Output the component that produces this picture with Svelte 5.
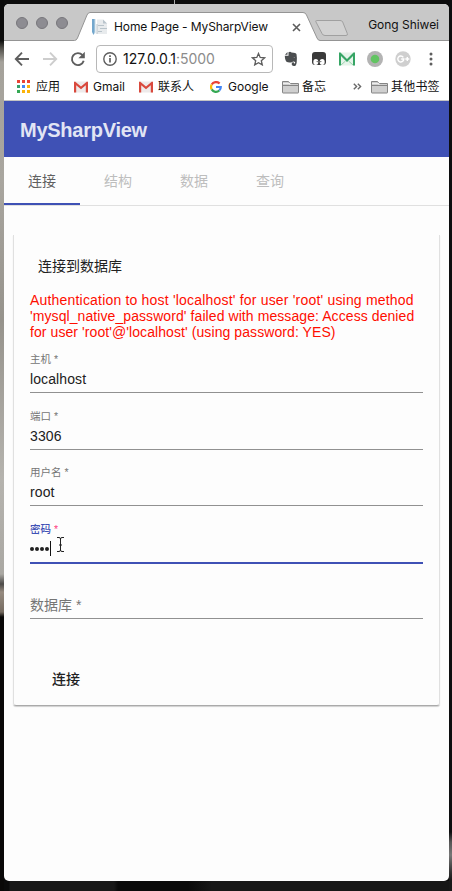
<script>
  const tabs = ['连接', '结构', '数据', '查询'];
  const active = 0;
  const errorLines = [
    "Authentication to host 'localhost' for user 'root' using method",
    "'mysql_native_password' failed with message: Access denied",
    "for user 'root'@'localhost' (using password: YES)"
  ];
  const fields = [
    { label: '主机', value: 'localhost', cls: 'host' },
    { label: '端口', value: '3306', cls: 'port' },
    { label: '用户名', value: 'root', cls: 'user' }
  ];
  const appColors = ['#ea4335', '#ea4335', '#ea4335', '#34a06a', '#4285f4', '#fbb30a', '#34a853', '#fbb30a', '#fbb30a'];
</script>

{#snippet mail()}
  <svg class="mail" width="14" height="12" viewBox="0 0 14 12">
    <path d="M0 .5h14v11H0z" fill="#eeeaea" />
    <path d="M0 11.5V1l1-.5 6 5 6-5 1 .5v10.5h-2.200V4.200L7 8.300 2.200 4.200v7.300z" fill="#d9493d" />
  </svg>
{/snippet}

{#snippet folder()}
  <svg class="folder" width="17" height="14" viewBox="0 0 17 14">
    <path d="M.5 12.500V1.500h6l1.500 2h8.500v9q0 .5-.5.500H1q-.5 0-.5-.5z" fill="#cfcfcf" stroke="#858585" />
    <path d="M1 3.500h7v2h8" fill="none" stroke="#eee" /><path d="M1 5.500h15" stroke="#858585" />
  </svg>
{/snippet}

<div class="desktop">
  <div class="streak"></div>
  <div class="window">
    <div class="tabstrip">
      <svg class="tabshape" width="445" height="37" viewBox="0 0 445 37">
        <path d="M0 36.500H70.500Q72.500 36.500 73.500 34L83 11Q84.200 8.500 86 8.500H299Q301.500 8.500 302.500 11L313 34Q314 36.500 316 36.500H445V38H0z" fill="#fff" />
        <path d="M0 36.500H70.500Q72.500 36.500 73.500 34L83 11Q84.200 8.500 86 8.500H299Q301.500 8.500 302.500 11L313 34Q314 36.500 316 36.500H445" fill="none" stroke="#949494" />
        <path d="M312.500 16.500H336Q338 16.500 338.700 18L343.300 29.500Q344 31.500 342 31.500H321Q318.800 31.500 318 29.500L312 18Q311.300 16.500 312.500 16.500z" fill="#d2d2d2" stroke="#a0a0a0" />
      </svg>
      <div class="lights"><i></i><i></i><i></i></div>
      <svg class="favicon" width="17" height="16" viewBox="0 0 17 16">
        <path d="M0 0h3v13l-1.500 3L0 13z" fill="#73a7cd" /><path d="M2.500 0h1v14l-1 1z" fill="#c5d9e5" />
        <path d="M5 .5h6l4 4V15H5z" fill="#e8ebed" /><path d="M11 .5v4h4z" fill="#b9c4cc" />
        <path d="M6 6.500h6M8 9.500h7M6 12.500h4M5 5v10" stroke="#b8c3ca" />
      </svg>
      <span class="title">Home Page - MySharpView</span>
      <svg class="close" width="9" height="9" viewBox="0 0 9 9"><path d="M1 1l7 7M8 1L1 8" stroke="#5c5c5c" stroke-width="1.600" /></svg>
      <span class="profile">Gong Shiwei</span>
    </div>

    <div class="toolbar">
      <svg class="nav" width="74" height="18" viewBox="0 0 74 18" fill="none" stroke-width="1.900">
        <path d="M15 9H2.500M8 2.700L1.800 9 8 15.300" stroke="#5e5e5e" />
        <path d="M29 9h12.500M36 2.700L42.200 9 36 15.300" stroke="#cdcdcd" />
        <path d="M68.500 5.200A6 6 0 1 0 69.700 10.800" stroke="#5e5e5e" />
        <path d="M70.800 1.800v6.400h-6.400z" fill="#5e5e5e" />
      </svg>
      <div class="address">
        <svg width="14" height="14" viewBox="0 0 14 14"><circle cx="7" cy="7" r="6.200" fill="none" stroke="#5e5e5e" stroke-width="1.400" /><path d="M7 6v4.500M7 3.300v1.700" stroke="#5e5e5e" stroke-width="1.700" /></svg>
        <span class="url">127.0.0.1<em>:5000</em></span>
        <svg class="star" width="15" height="14" viewBox="0 0 15 14"><path d="M7.500 1.400l1.700 4 4.400.4-3.300 2.900 1 4.200-3.800-2.200-3.800 2.200 1-4.200L1.400 5.800l4.400-.4z" fill="none" stroke="#5e5e5e" stroke-width="1.300" /></svg>
      </div>
      <svg class="ext" width="154" height="18" viewBox="0 0 154 18">
        <path d="M3.500 2L1 4.800h2.500zM4.500 2.200Q6.500 1.200 7.500 2.600q4.500.2 5 1.600.8 4 .2 8.200-.5 3.700-2.700 3.600-2.700-.1-2.200-2.700.3-1.200 1.900-1 .3 1.700 1.300 1 .7-1-.4-1.600-1.800-.6-2.600.5Q4.500 13 2.500 11.700 1 10.500.8 5.800h3.700z" fill="#4b4e50" /><path d="M9.400 7.300q1-.9 1.800.3z" fill="#fff" />
        <path d="M31 2h8q3 0 3 3v7q0 3-3 3h-8q-3 0-3-3V5q0-3 3-3z" fill="#3a3a3a" /><ellipse cx="31.800" cy="12" rx="2.500" ry="2.900" fill="#fff" /><ellipse cx="38.200" cy="12" rx="2.500" ry="2.900" fill="#fff" /><circle cx="33.200" cy="11.600" r=".7" fill="#555" /><circle cx="36.800" cy="11.600" r=".7" fill="#555" />
        <path d="M55 2.500h16v13H55z" fill="#e6f4ea" /><path d="M55 15.500v-13h1.500l6.500 6.500 6.500-6.500H71v13h-2V6l-6 6-6-6v9.500z" fill="#36a565" /><path d="M57 15l4.500-4M69 15l-4.500-4" stroke="#9bd0ae" />
        <circle cx="91" cy="9" r="8" fill="#b3b3b3" /><circle cx="91" cy="9" r="4.300" fill="#62c462" />
        <circle cx="119" cy="9" r="7.700" fill="#cfcfcf" /><path d="M119.300 7.300A3 3 0 1 0 119.800 9h-2.600M121.300 9h4M123.300 7v4" fill="none" stroke="#fff" stroke-width="1.400" />
        <circle cx="147" cy="4" r="1.500" fill="#5e5e5e" /><circle cx="147" cy="9" r="1.500" fill="#5e5e5e" /><circle cx="147" cy="14" r="1.500" fill="#5e5e5e" />
      </svg>
    </div>

    <div class="bookmarks">
      <div class="apps">
        {#each appColors as c}<i style="background:{c}"></i>{/each}
      </div>
      <span class="bm b-apps">应用</span>
      {@render mail()}
      <span class="bm b-gmail">Gmail</span>
      {@render mail()}
      <span class="bm b-contacts">联系人</span>
      <svg class="g" width="12" height="12" viewBox="0 0 12 12" fill="none" stroke-width="2.200">
        <path d="M1.700 3.600A4.900 4.900 0 0 1 9.600 2.600" stroke="#ea4335" /><path d="M1.700 3.600a4.900 4.900 0 0 0 0 4.800" stroke="#fbbc05" />
        <path d="M1.700 8.400A4.900 4.900 0 0 0 9.300 9.500" stroke="#34a853" /><path d="M9.300 9.500A4.800 4.800 0 0 0 10.800 6H6" stroke="#4285f4" />
      </svg>
      <span class="bm b-google">Google</span>
      {@render folder()}
      <span class="bm b-memo">备忘</span>
      <svg class="more" width="9" height="7" viewBox="0 0 9 7"><path d="M.8.700L3.600 3.500.8 6.300M4.800.700L7.600 3.500 4.800 6.300" fill="none" stroke="#686868" stroke-width="1.400" /></svg>
      {@render folder()}
      <span class="bm b-other">其他书签</span>
    </div>

    <header><h1>MySharpView</h1></header>
    <nav class="tabs">
      {#each tabs as t, i}<div class="tab" class:active={i === active}>{t}</div>{/each}
    </nav>

    <main>
      <section class="card">
        <h2>连接到数据库</h2>
        <div class="error">{#each errorLines as line}<p>{line}</p>{/each}</div>
        {#each fields as f}
          <div class="field {f.cls}">
            <div class="label">{f.label} *</div>
            <div class="value">{f.value}</div>
          </div>
        {/each}
        <div class="field focused">
          <div class="label">密码 <b>*</b></div>
          <div class="value password"><i></i><i></i><i></i><i></i><span class="caret"></span></div>
          <svg class="pointer" width="9" height="17" viewBox="0 0 9 17"><path d="M1 1.500h2q1.500 0 1.500 1.500v11q0 1.500-1.500 1.500H1M8 1.500H6Q4.500 1.500 4.500 3M8 15.500H6q-1.500 0-1.500-1.500M3 9h3" fill="none" stroke="#222" /></svg>
        </div>
        <div class="field empty">数据库 *</div>
        <div class="action">连接</div>
      </section>
    </main>
  </div>
</div>

<style>
  :global(body) { margin: 0; background: #0b0b0b; }
  .desktop {
    box-sizing: border-box; width: 452px; height: 891px; padding: 4px 3px 10px 4px; overflow: hidden; position: relative;
    background:
      linear-gradient(to bottom, #0a0a0a 0 40px, #504e49 48px, #a5a29b 62px, #a9a69f 180px, #96938c 320px, #b5b3ae 480px, #aaa8a3 574px, #4c4a48 584px, #968b80 592px, #756b60 612px, #090807 617px) left top / 4px 100% no-repeat,
      linear-gradient(to bottom, #0d0e0f 0 832px, #555 842px, #777 855px, #333 872px, #191919 880px) right top / 3px 100% no-repeat,
      linear-gradient(to right, #0b0b0b 0 9px, #181818 10px 114px, #0a0a0a 118px 188px, #171717 212px 100%) left bottom / 100% 10px no-repeat,
      #0c0c0c;
    font-family: "Liberation Sans", "Noto Sans CJK SC", sans-serif;
  }
  .streak { position: absolute; left: 174px; top: 0; width: 1px; height: 4px; background: #aaa; }
  .window { height: 877px; background: #fdfdfd; border-radius: 5px; overflow: hidden; display: flex; flex-direction: column; }
  svg { display: block; flex: none; }

  .tabstrip { position: relative; height: 37px; flex: none; display: flex; align-items: center; background: #c8c8c8; color: #111; font-family: Inter, "Noto Sans CJK SC", sans-serif; white-space: nowrap; }
  .tabshape { position: absolute; left: 0; top: 0; }
  .tabstrip > :not(.tabshape) { position: relative; }
  .lights { display: flex; gap: 8px; margin: 0 0 0 12px; }
  .lights i { box-sizing: border-box; width: 12px; height: 12px; border-radius: 50%; background: #8d8c92; border: 1px solid #77767b; }
  .favicon { margin: 9px 5px 0 24px; }
  .title { width: 154px; margin: 8px 24px 0 0; font-size: 12px; line-height: 18px; letter-spacing: -.11px; }
  .close { margin-top: 9px; }
  .profile { margin: 4px 0 0 auto; padding-right: 10px; font-size: 12px; line-height: 16px; letter-spacing: -.03px; }

  .toolbar { height: 36px; flex: none; display: flex; align-items: center; background: #fff; }
  .nav { margin-left: 10px; }
  .address { box-sizing: border-box; width: 177px; height: 28px; margin-left: 8px; padding: 0 6px 0 6px; border: 1px solid #b8b8b8; border-radius: 4px; display: flex; align-items: center; }
  .url { margin-left: 6px; font: 14px/20px Inter, sans-serif; color: #111; letter-spacing: -.03px; }
  .url em { font-style: normal; color: #8c8c8c; }
  .star { margin-left: auto; }
  .ext { margin-left: 11px; }

  .bookmarks { box-sizing: border-box; height: 24px; flex: none; display: flex; align-items: center; padding: 0 0 4px 13px; border-bottom: 1px solid #c4c4c4; background: #fff; color: #111; font: 12px/18px Inter, "Noto Sans CJK SC", sans-serif; white-space: nowrap; }
  .bm { flex: none; }
  .apps { display: grid; grid-template-columns: repeat(3, 3px); gap: 2px; margin-right: 6px; }
  .apps i { height: 3px; }
  .mail { margin-right: 5px; }
  .g { margin-right: 6px; }
  .folder { margin-right: 3px; }
  .b-apps { width: 38px; }
  .b-gmail { width: 46px; }
  .b-contacts { width: 52px; }
  .b-google { width: 54px; }
  .b-memo { width: 51px; }
  .b-other { letter-spacing: .2px; }
  .more { margin-right: 9px; }

  header { height: 56px; flex: none; display: flex; align-items: center; padding-left: 16px; background: #3f51b5; }
  h1 { margin: 1px 0 0; font-size: 20px; line-height: 28px; color: #e2e5f4; letter-spacing: -.25px; }
  .tabs { box-sizing: border-box; height: 49px; flex: none; display: flex; border-bottom: 1px solid #e0e0e0; }
  .tab { box-sizing: border-box; width: 76px; height: 48px; border-bottom: 2px solid transparent; text-align: center; font-size: 14px; line-height: 49px; color: #bdbdbd; }
  .tab.active { color: #606060; border-color: #3f51b5; }

  main { padding: 29px 9px 0; }
  .card { box-sizing: border-box; height: 471px; padding: 0 16px; border: 1px solid #e0e0e0; border-top: 0; border-bottom-color: #aaa; border-radius: 0 0 3px 3px; box-shadow: 0 1px 1px #d0d0d0; color: #212121; overflow: clip; overflow-clip-margin: 3px; }
  h2 { margin: 0 0 16px 8px; padding-top: 21px; font-weight: 400; font-size: 14px; line-height: 20px; }
  .error { color: #ff0d00; font-size: 14px; line-height: 16px; white-space: nowrap; letter-spacing: .08px; }
  .error p { margin: 0; }
  .error p:first-child { letter-spacing: .19px; }
  .field { box-sizing: border-box; height: 57px; border-bottom: 1px solid #919191; position: relative; }
  .host { height: 53px; }
  .user { height: 56px; }
  .label { font-size: 10.500px; line-height: 14px; color: #757575; padding-top: 16px; }
  .host .label { padding-top: 12px; }
  .user .label { padding-top: 15px; }
  .value { font-size: 14px; line-height: 20px; margin-top: 3px; letter-spacing: .1px; }
  .focused { height: 58px; border-bottom: 2px solid #3f51b5; }
  .focused .label { color: #3f51b5; font-weight: 500; }
  .focused b { color: #ff4081; font-weight: 400; }
  .password { display: flex; align-items: center; gap: 1px; margin-top: 5px; }
  .password i { width: 4px; height: 4px; border-radius: 50%; background: #212121; }
  .caret { width: 1px; height: 15px; background: #111; }
  .pointer { position: absolute; left: 26px; top: 30px; }
  .empty { height: 55px; padding-top: 31px; font-size: 14px; line-height: 20px; color: #757575; }
  .action { margin: 50px 0 0 22px; font-size: 14px; font-weight: 500; line-height: 20px; }
</style>
